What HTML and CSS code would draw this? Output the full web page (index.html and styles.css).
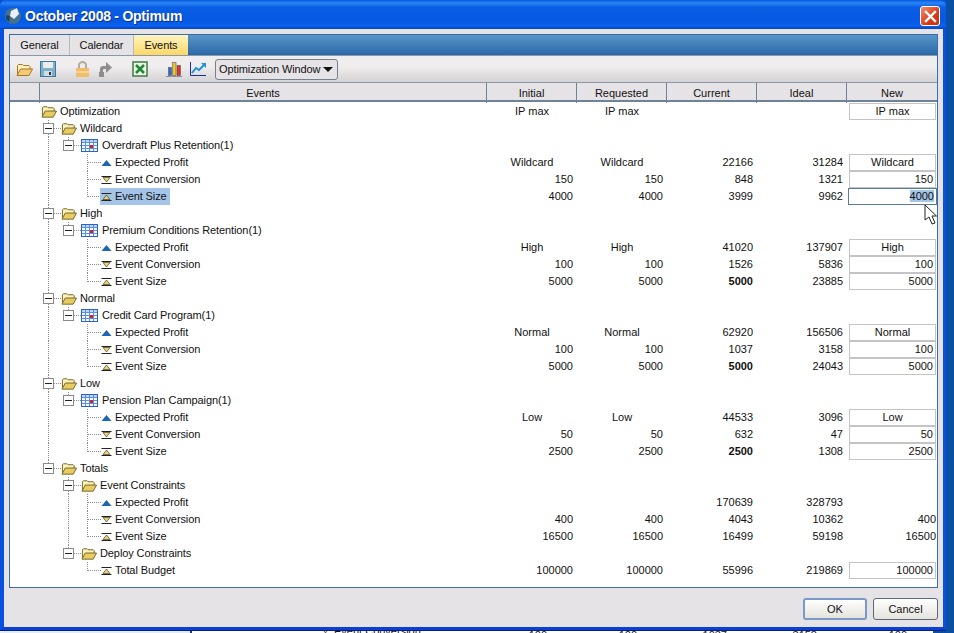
FILE: index.html
```html
<!DOCTYPE html>
<html lang="en">
<head>
    <meta charset="UTF-8">
    <title>October 2008 - Optimum</title>
    <link rel="stylesheet" href="styles.css">
</head>
<body>

    <!-- icons used in the tree and toolbar -->
    <svg class="defs" width="0" height="0">
        <symbol id="folder" viewBox="0 0 17 13">
            <path d="M1.500 11V2.500l1-1h4l1 1h5.500l1 1V6" fill="#fbf3b8" stroke="#6e6226"/>
            <path d="M1 12.500l3.500-6.500h12l-3.500 6.500z" fill="#e8cc62" stroke="#6e6226"/>
        </symbol>
        <symbol id="table" viewBox="0 0 17 13">
            <rect x=".5" y=".5" width="16" height="12" fill="#f4f8ff"/>
            <rect x=".5" y=".5" width="16" height="3" fill="#bcd4f6"/>
            <path d="M.5 3.500h16M.5 6.500h16M.5 9.500h16M4.500 .5v12M8.500 .5v12M12.500 .5v12" stroke="#5a90e0" fill="none"/>
            <rect x=".5" y=".5" width="16" height="12" fill="none" stroke="#2a62c8"/>
            <rect x="9" y="6" width="3" height="3" fill="#d82020"/>
        </symbol>
        <symbol id="up" viewBox="0 0 11 8">
            <path d="M5.500 1L10.500 7H.5z" fill="#1f66b0"/>
        </symbol>
        <symbol id="min" viewBox="0 0 11 8">
            <path d="M.5 .5h10M.5 7.500h10" stroke="#222" fill="none"/>
            <path d="M2 1.500h7L5.500 6z" fill="#f0d468" stroke="#222" stroke-width=".6"/>
        </symbol>
        <symbol id="max" viewBox="0 0 11 8">
            <path d="M.5 .5h10M.5 7.500h10" stroke="#222" fill="none"/>
            <path d="M2 6.500h7L5.500 2z" fill="#f0d468" stroke="#222" stroke-width=".6"/>
        </symbol>
    </svg>

    <div class="behind">
        <div class="behind-left"></div>
        <div class="behind-right">
            <span class="behind-name"><svg class="ico mark"><use href="#min"/></svg>Event Conversion</span>
            <span class="behind-num">100</span>
            <span class="behind-num">100</span>
            <span class="behind-num">1037</span>
            <span class="behind-num">3158</span>
            <span class="behind-num">100</span>
        </div>
    </div>

    <div class="window">
        <div class="titlebar">
            <svg class="app-icon" width="18" height="18" viewBox="0 0 18 18">
                <circle cx="9" cy="9" r="8" fill="#46708c"/>
                <path d="M7 4l6-3 2 6-5 5-4-3z" fill="#e8f0f8"/>
                <path d="M2 8l4 1-1 6-3-3z" fill="#1e4560"/>
            </svg>
            <span class="title">October 2008 - Optimum</span>
            <button class="close">
                <svg width="13" height="13" viewBox="0 0 13 13">
                    <path d="M2 2l9 9M11 2l-9 9" stroke="#fff" stroke-width="2.400" stroke-linecap="square"/>
                </svg>
            </button>
        </div>

        <div class="client">
            <div class="panel">
                <div class="tabs">
                    <div class="tab">General</div>
                    <div class="tab">Calendar</div>
                    <div class="tab active">Events</div>
                </div>

                <div class="toolbar">
                    <svg class="tool" width="17" height="13" viewBox="0 0 17 13">
                        <path d="M1.500 11V2.500l1-1h4l1 1h5.500l1 1V6" fill="#fff0c0" stroke="#a87820"/>
                        <path d="M1 12.500l3.500-6.500h12l-3.500 6.500z" fill="#f6c878" stroke="#a87820"/>
                    </svg>
                    <svg class="tool" width="16" height="16" viewBox="0 0 16 16">
                        <rect x=".5" y=".5" width="15" height="15" fill="#7fb0c8" stroke="#3a7a9c"/>
                        <rect x="3" y="1" width="10" height="6" fill="#eceeee"/>
                        <rect x="4" y="10" width="8" height="5" fill="#cfdde4"/>
                        <rect x="9" y="11" width="2" height="3" fill="#334"/>
                    </svg>
                    <svg class="tool lock" width="15" height="17" viewBox="0 0 15 17">
                        <path d="M4 8V4.500a3.500 3.500 0 0 1 7 0V8" fill="none" stroke="#b4aca0" stroke-width="2"/>
                        <rect x="1" y="7" width="13" height="9" fill="#f2bc68"/>
                        <rect x="1" y="10" width="13" height="2" fill="#f8d498"/>
                    </svg>
                    <svg class="tool arrow" width="16" height="16" viewBox="0 0 16 16">
                        <path d="M3 11V8q0-3 3-3h3V1l6 5.500-6 5.500V8H7q-1 0-1 1v2z" fill="#8e8e8e"/>
                        <rect x="2" y="11" width="5" height="5" fill="#8e8e8e"/>
                    </svg>
                    <svg class="tool excel" width="16" height="16" viewBox="0 0 16 16">
                        <rect x="1" y="1" width="14" height="14" fill="#f0f6e8" stroke="#3c7c44" stroke-width="1.500"/>
                        <path d="M4 4l8 8M12 4l-8 8" stroke="#1f8a3a" stroke-width="2.600"/>
                    </svg>
                    <svg class="tool chart" width="16" height="16" viewBox="0 0 16 16">
                        <path d="M0 15.500h16" stroke="#8890a0"/>
                        <rect x="2.500" y="6.500" width="3" height="8" fill="#3468c8" stroke="#445"  stroke-width=".5"/>
                        <rect x="6.500" y="1.500" width="3.500" height="13" fill="#ecc430" stroke="#445" stroke-width=".5"/>
                        <rect x="11" y="4.500" width="3.500" height="10" fill="#d83820" stroke="#445" stroke-width=".5"/>
                    </svg>
                    <svg class="tool line-chart" width="16" height="14" viewBox="0 0 16 14">
                        <path d="M.5 0v13.500H16" fill="none" stroke="#1a2f9c"/>
                        <path d="M2 11l4-5 3 2 5-5" fill="none" stroke="#2090d8" stroke-width="2"/>
                        <path d="M11 1h5v5z" fill="#2090d8"/>
                    </svg>
                    <div class="dropdown">Optimization Window <span class="caret"></span></div>
                </div>

                <div class="row head">
                    <div class="hcell stub"></div>
                    <div class="hcell events">Events</div>
                    <div class="hcell">Initial</div>
                    <div class="hcell">Requested</div>
                    <div class="hcell">Current</div>
                    <div class="hcell">Ideal</div>
                    <div class="hcell">New</div>
                </div>

                <div class="rows">
                    <div class="row">
                        <div class="tree"><svg class="ico folder"><use href="#folder"/></svg><span class="lbl">Optimization</span></div>
                        <div class="c mid">IP max</div><div class="c mid">IP max</div><div class="c"></div><div class="c"></div><div class="c"><span class="inp mid">IP max</span></div>
                    </div>

                    <div class="row">
                        <div class="tree"><span class="slot box both"><i></i></span><svg class="ico folder"><use href="#folder"/></svg><span class="lbl">Wildcard</span></div>
                        <div class="c"></div><div class="c"></div><div class="c"></div><div class="c"></div><div class="c"></div>
                    </div>
                    <div class="row">
                        <div class="tree"><span class="slot line"></span><span class="slot box upper"><i></i></span><svg class="ico table"><use href="#table"/></svg><span class="lbl">Overdraft Plus Retention(1)</span></div>
                        <div class="c"></div><div class="c"></div><div class="c"></div><div class="c"></div><div class="c"></div>
                    </div>
                    <div class="row">
                        <div class="tree"><span class="slot line"></span><span class="slot"></span><span class="slot tee"></span><svg class="ico mark"><use href="#up"/></svg><span class="lbl">Expected Profit</span></div>
                        <div class="c mid">Wildcard</div><div class="c mid">Wildcard</div><div class="c">22166</div><div class="c">31284</div><div class="c"><span class="inp mid">Wildcard</span></div>
                    </div>
                    <div class="row">
                        <div class="tree"><span class="slot line"></span><span class="slot"></span><span class="slot tee"></span><svg class="ico mark"><use href="#min"/></svg><span class="lbl">Event Conversion</span></div>
                        <div class="c">150</div><div class="c">150</div><div class="c">848</div><div class="c">1321</div><div class="c"><span class="inp">150</span></div>
                    </div>
                    <div class="row">
                        <div class="tree"><span class="slot line"></span><span class="slot"></span><span class="slot end short"></span><span class="picked"><svg class="ico mark"><use href="#max"/></svg><span class="lbl">Event Size</span></span></div>
                        <div class="c">4000</div><div class="c">4000</div><div class="c">3999</div><div class="c">9962</div><div class="c"><span class="inp focus"><span class="sel">4000</span></span></div>
                    </div>

                    <div class="row">
                        <div class="tree"><span class="slot box both"><i></i></span><svg class="ico folder"><use href="#folder"/></svg><span class="lbl">High</span></div>
                        <div class="c"></div><div class="c"></div><div class="c"></div><div class="c"></div><div class="c"></div>
                    </div>
                    <div class="row">
                        <div class="tree"><span class="slot line"></span><span class="slot box upper"><i></i></span><svg class="ico table"><use href="#table"/></svg><span class="lbl">Premium Conditions Retention(1)</span></div>
                        <div class="c"></div><div class="c"></div><div class="c"></div><div class="c"></div><div class="c"></div>
                    </div>
                    <div class="row">
                        <div class="tree"><span class="slot line"></span><span class="slot"></span><span class="slot tee"></span><svg class="ico mark"><use href="#up"/></svg><span class="lbl">Expected Profit</span></div>
                        <div class="c mid">High</div><div class="c mid">High</div><div class="c">41020</div><div class="c">137907</div><div class="c"><span class="inp mid">High</span></div>
                    </div>
                    <div class="row">
                        <div class="tree"><span class="slot line"></span><span class="slot"></span><span class="slot tee"></span><svg class="ico mark"><use href="#min"/></svg><span class="lbl">Event Conversion</span></div>
                        <div class="c">100</div><div class="c">100</div><div class="c">1526</div><div class="c">5836</div><div class="c"><span class="inp">100</span></div>
                    </div>
                    <div class="row">
                        <div class="tree"><span class="slot line"></span><span class="slot"></span><span class="slot end"></span><svg class="ico mark"><use href="#max"/></svg><span class="lbl">Event Size</span></div>
                        <div class="c">5000</div><div class="c">5000</div><div class="c"><b>5000</b></div><div class="c">23885</div><div class="c"><span class="inp">5000</span></div>
                    </div>

                    <div class="row">
                        <div class="tree"><span class="slot box both"><i></i></span><svg class="ico folder"><use href="#folder"/></svg><span class="lbl">Normal</span></div>
                        <div class="c"></div><div class="c"></div><div class="c"></div><div class="c"></div><div class="c"></div>
                    </div>
                    <div class="row">
                        <div class="tree"><span class="slot line"></span><span class="slot box upper"><i></i></span><svg class="ico table"><use href="#table"/></svg><span class="lbl">Credit Card Program(1)</span></div>
                        <div class="c"></div><div class="c"></div><div class="c"></div><div class="c"></div><div class="c"></div>
                    </div>
                    <div class="row">
                        <div class="tree"><span class="slot line"></span><span class="slot"></span><span class="slot tee"></span><svg class="ico mark"><use href="#up"/></svg><span class="lbl">Expected Profit</span></div>
                        <div class="c mid">Normal</div><div class="c mid">Normal</div><div class="c">62920</div><div class="c">156506</div><div class="c"><span class="inp mid">Normal</span></div>
                    </div>
                    <div class="row">
                        <div class="tree"><span class="slot line"></span><span class="slot"></span><span class="slot tee"></span><svg class="ico mark"><use href="#min"/></svg><span class="lbl">Event Conversion</span></div>
                        <div class="c">100</div><div class="c">100</div><div class="c">1037</div><div class="c">3158</div><div class="c"><span class="inp">100</span></div>
                    </div>
                    <div class="row">
                        <div class="tree"><span class="slot line"></span><span class="slot"></span><span class="slot end"></span><svg class="ico mark"><use href="#max"/></svg><span class="lbl">Event Size</span></div>
                        <div class="c">5000</div><div class="c">5000</div><div class="c"><b>5000</b></div><div class="c">24043</div><div class="c"><span class="inp">5000</span></div>
                    </div>

                    <div class="row">
                        <div class="tree"><span class="slot box both"><i></i></span><svg class="ico folder"><use href="#folder"/></svg><span class="lbl">Low</span></div>
                        <div class="c"></div><div class="c"></div><div class="c"></div><div class="c"></div><div class="c"></div>
                    </div>
                    <div class="row">
                        <div class="tree"><span class="slot line"></span><span class="slot box upper"><i></i></span><svg class="ico table"><use href="#table"/></svg><span class="lbl">Pension Plan Campaign(1)</span></div>
                        <div class="c"></div><div class="c"></div><div class="c"></div><div class="c"></div><div class="c"></div>
                    </div>
                    <div class="row">
                        <div class="tree"><span class="slot line"></span><span class="slot"></span><span class="slot tee"></span><svg class="ico mark"><use href="#up"/></svg><span class="lbl">Expected Profit</span></div>
                        <div class="c mid">Low</div><div class="c mid">Low</div><div class="c">44533</div><div class="c">3096</div><div class="c"><span class="inp mid">Low</span></div>
                    </div>
                    <div class="row">
                        <div class="tree"><span class="slot line"></span><span class="slot"></span><span class="slot tee"></span><svg class="ico mark"><use href="#min"/></svg><span class="lbl">Event Conversion</span></div>
                        <div class="c">50</div><div class="c">50</div><div class="c">632</div><div class="c">47</div><div class="c"><span class="inp">50</span></div>
                    </div>
                    <div class="row">
                        <div class="tree"><span class="slot line"></span><span class="slot"></span><span class="slot end"></span><svg class="ico mark"><use href="#max"/></svg><span class="lbl">Event Size</span></div>
                        <div class="c">2500</div><div class="c">2500</div><div class="c"><b>2500</b></div><div class="c">1308</div><div class="c"><span class="inp">2500</span></div>
                    </div>

                    <div class="row">
                        <div class="tree"><span class="slot box upper"><i></i></span><svg class="ico folder"><use href="#folder"/></svg><span class="lbl">Totals</span></div>
                        <div class="c"></div><div class="c"></div><div class="c"></div><div class="c"></div><div class="c"></div>
                    </div>
                    <div class="row">
                        <div class="tree"><span class="slot"></span><span class="slot box both"><i></i></span><svg class="ico folder"><use href="#folder"/></svg><span class="lbl">Event Constraints</span></div>
                        <div class="c"></div><div class="c"></div><div class="c"></div><div class="c"></div><div class="c"></div>
                    </div>
                    <div class="row">
                        <div class="tree"><span class="slot"></span><span class="slot line"></span><span class="slot tee"></span><svg class="ico mark"><use href="#up"/></svg><span class="lbl">Expected Profit</span></div>
                        <div class="c"></div><div class="c"></div><div class="c">170639</div><div class="c">328793</div><div class="c"></div>
                    </div>
                    <div class="row">
                        <div class="tree"><span class="slot"></span><span class="slot line"></span><span class="slot tee"></span><svg class="ico mark"><use href="#min"/></svg><span class="lbl">Event Conversion</span></div>
                        <div class="c">400</div><div class="c">400</div><div class="c">4043</div><div class="c">10362</div><div class="c plain">400</div>
                    </div>
                    <div class="row">
                        <div class="tree"><span class="slot"></span><span class="slot line"></span><span class="slot end"></span><svg class="ico mark"><use href="#max"/></svg><span class="lbl">Event Size</span></div>
                        <div class="c">16500</div><div class="c">16500</div><div class="c">16499</div><div class="c">59198</div><div class="c plain">16500</div>
                    </div>
                    <div class="row">
                        <div class="tree"><span class="slot"></span><span class="slot box upper"><i></i></span><svg class="ico folder"><use href="#folder"/></svg><span class="lbl">Deploy Constraints</span></div>
                        <div class="c"></div><div class="c"></div><div class="c"></div><div class="c"></div><div class="c"></div>
                    </div>
                    <div class="row">
                        <div class="tree"><span class="slot"></span><span class="slot"></span><span class="slot end"></span><svg class="ico mark"><use href="#max"/></svg><span class="lbl">Total Budget</span></div>
                        <div class="c">100000</div><div class="c">100000</div><div class="c">55996</div><div class="c">219869</div><div class="c"><span class="inp">100000</span></div>
                    </div>
                </div>
            </div>

            <div class="actions">
                <button class="btn default">OK</button>
                <button class="btn">Cancel</button>
            </div>
        </div>
    </div>

    <!-- mouse pointer over the New column -->
    <svg class="cursor" width="13" height="21" viewBox="0 0 13 21">
        <path d="M1 1v15l4-3 3 7 3-1-3-7h4.500z" fill="#fff" stroke="#222"/>
    </svg>

</body>
</html>
```

FILE: styles.css
```css
* {
    box-sizing: border-box;
}
html, body {
    height: 100%;
}
body {
    margin: 0;
    position: relative;
    overflow: hidden;
    background: #0b4fa3;
    font-family: "Liberation Sans", Arial, sans-serif;
    font-size: 11px;
    color: #111;
}
.defs {
    position: absolute;
}

/* window behind the dialog, only its last line shows */
.behind {
    position: absolute;
    left: 0;
    top: 629px;
    bottom: 0;
    width: 933px;
    display: flex;
    line-height: 13px;
}
.behind-left {
    width: 192px;
    background: #e0edf3;
    border-right: 2px solid #1c3a78;
}
.behind-right {
    flex: 1;
    display: flex;
    background: #fff;
}
.behind-name {
    width: 265px;
    padding-left: 128px;
    display: flex;
    align-items: center;
}
.behind-num {
    width: 90px;
    text-align: right;
}

.window {
    position: relative;
    width: 946px;
    height: 630px;
    display: flex;
    flex-direction: column;
    background: #0a45d8;
    border-bottom: 3px solid #0a3fd8;
    border-left: 4px solid #0a50e0;
    border-right: 3px solid #0a50e0;
    box-shadow: 0 1px 0 #06207c;
}
.titlebar {
    height: 29px;
    margin: 0 -3px 0 -4px;
    padding: 3px 6px 0 4px;
    display: flex;
    align-items: center;
    gap: 3px;
    background: linear-gradient(#0a5ae0 0, #2a86f4 3px, #0a5fe4 7px, #0558e2 20px, #0a62ec 26px, #0540c4 29px);
    border-radius: 6px 6px 0 0;
}
.title {
    flex: 1;
    font-size: 14px;
    font-weight: bold;
    letter-spacing: -.25px;
    color: #fff;
    text-shadow: 1px 1px 0 #0a2f90;
}
.close {
    width: 20px;
    height: 20px;
    padding: 0;
    display: flex;
    align-items: center;
    justify-content: center;
    background: linear-gradient(135deg, #f09070, #d83c18 60%, #c83010);
    border: 1px solid #fff;
    border-radius: 3px;
}
.client {
    flex: 1;
    display: flex;
    flex-direction: column;
    padding: 5px 5px 0 5px;
    background: #e6e3e6;
}
.panel {
    width: 929px;
    height: 554px;
    display: flex;
    flex-direction: column;
    background: #fff;
    border: 1px solid #3a6ea5;
}

.tabs {
    height: 20px;
    display: flex;
    letter-spacing: -.1px;
    background: linear-gradient(#5a96c8, #2a68a8);
}
.tab {
    width: 60px;
    padding-top: 4px;
    text-align: center;
    background: #e6e3e6;
    border-right: 1px solid #b8b8b8;
}
.tab + .tab {
    width: 64px;
}
.tab.active {
    width: 54px;
    background: linear-gradient(#fff4c0, #fcd868);
    border-right: 0;
}

.toolbar {
    height: 28px;
    display: flex;
    align-items: center;
    padding-left: 6px;
    background: linear-gradient(#f0edee, #f0edee 40%, #d4d2d4);
    border-top: 1px solid #8a98a8;
    border-bottom: 1px solid #8a98a8;
}
.tool {
    flex: none;
    margin-right: 7px;
}
.lock {
    margin-left: 12px;
}
.arrow {
    margin-right: 19px;
}
.excel {
    margin-right: 18px;
}
.chart {
    margin-right: 8px;
}
.line-chart {
    margin-right: 9px;
}
.dropdown {
    width: 123px;
    height: 21px;
    display: flex;
    align-items: center;
    justify-content: space-between;
    padding: 0 4px 0 3px;
    white-space: nowrap;
    letter-spacing: -.1px;
    background: #e6e3e6;
    border: 1px solid #77818c;
    border-radius: 3px;
}
.caret {
    width: 0;
    height: 0;
    border-left: 5px solid transparent;
    border-right: 5px solid transparent;
    border-top: 5px solid #111;
}

.row {
    display: grid;
    grid-template-columns: 477px repeat(5, 90px);
    height: 17px;
    line-height: 17px;
}
.head {
    grid-template-columns: 30px 447px repeat(5, 90px);
    height: 19px;
    line-height: 20px;
    background: #e6e3e6;
    border-bottom: 2px solid #6e8298;
}
.hcell {
    text-align: center;
    border-right: 1px solid #6e8298;
}
.hcell:last-child {
    border-right: 0;
}
.rows {
    padding-top: 1px;
}

/* tree column: slots are 20px wide, one per level, those
   with a connector run 3px further up to the icon */
.tree {
    display: flex;
    align-items: center;
    padding-left: 28px;
    white-space: nowrap;
}
.slot {
    flex: none;
    width: 20px;
    height: 17px;
    display: flex;
    align-items: center;
    --dot-v: repeating-linear-gradient(to bottom, #8c8c8c 0 1px, transparent 1px 2px);
    --dot-h: repeating-linear-gradient(to right, #8c8c8c 0 1px, transparent 1px 2px);
    background-repeat: no-repeat;
}
.line {
    background-image: var(--dot-v);
    background-size: 1px 100%;
    background-position: 10px 0;
}
.tee {
    width: 23px;
    background-image: var(--dot-v), var(--dot-h);
    background-size: 1px 100%, 14px 1px;
    background-position: 9px 0, 10px 8px;
}
.end {
    width: 23px;
    background-image: var(--dot-v), var(--dot-h);
    background-size: 1px 9px, 14px 1px;
    background-position: 9px 0, 10px 8px;
}
.end.short {
    width: 22px;
}
.box {
    width: 23px;
    padding-left: 5px;
    background-image: var(--dot-h);
    background-size: 13px 1px;
    background-position: 10px 8px;
}
.box.upper {
    background-image: var(--dot-h), var(--dot-v);
    background-size: 13px 1px, 1px 9px;
    background-position: 10px 8px, 10px 0;
}
.box.both {
    background-image: var(--dot-h), var(--dot-v);
    background-size: 13px 1px, 1px 100%;
    background-position: 10px 8px, 10px 0;
}
.box i {
    width: 11px;
    height: 11px;
    background: linear-gradient(#222, #222) center / 7px 1px no-repeat #fff;
    border: 1px solid #8a8a8a;
}
.ico {
    flex: none;
}
.folder {
    width: 16px;
    height: 13px;
    margin-right: 3px;
}
.tree > .folder:first-child {
    margin-left: 3px;
}
.table {
    width: 17px;
    height: 13px;
    margin-right: 4px;
}
.mark {
    width: 11px;
    height: 8px;
    margin-right: 3px;
}
.lbl {
    height: 17px;
    letter-spacing: -.1px;
}
.picked {
    height: 17px;
    display: flex;
    align-items: center;
    padding: 0 3px 0 1px;
    background: #a4c4e8;
}

.c {
    padding-right: 4px;
    text-align: right;
}
.plain {
    padding-right: 1px;
}
.mid {
    padding-right: 0;
    text-align: center;
}
.inp {
    display: block;
    width: 87px;
    height: 17px;
    margin-left: 2px;
    padding-right: 2px;
    line-height: 15px;
    text-align: right;
    background: #fff;
    border: 1px solid #c4c4c4;
}
.inp.mid {
    padding-right: 0;
    text-align: center;
}
.inp.focus {
    width: 89px;
    margin-left: 1px;
    border-color: #5a7a9a;
}
.sel {
    background: #a4c4e8;
}

.actions {
    display: flex;
    justify-content: flex-end;
    gap: 6px;
    padding: 10px 0 0;
}
.btn {
    width: 65px;
    height: 22px;
    padding: 0;
    font: inherit;
    color: #111;
    background: linear-gradient(#fff, #e6e3dc);
    border: 1px solid #5a6a7a;
    border-radius: 3px;
}
.default {
    width: 64px;
    border: 2px solid #7c98c8;
}

.cursor {
    position: absolute;
    left: 924px;
    top: 204px;
}
```
